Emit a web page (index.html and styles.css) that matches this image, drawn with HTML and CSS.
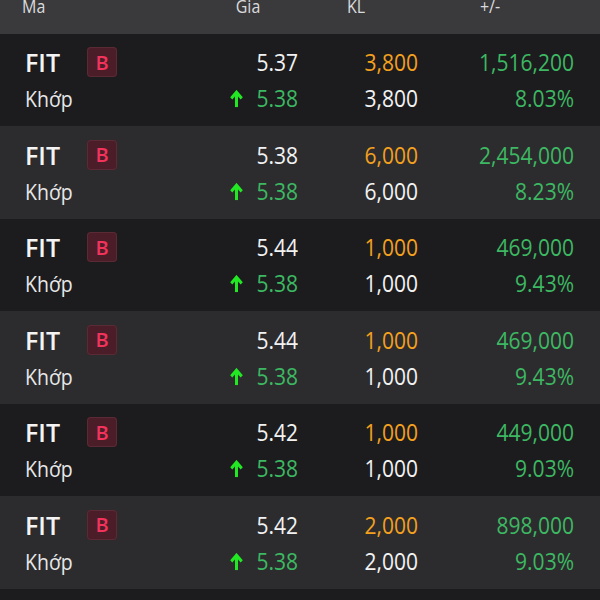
FILE: index.html
```html
<!DOCTYPE html>
<html lang="vi">
<head>
<meta charset="utf-8">
<link rel="stylesheet" href="styles.css">
</head>
<body>
<div class="table">
  <div class="head">
    <span class="h-ma">Ma</span>
    <span class="h-gia">Gia</span>
    <span class="h-kl">KL</span>
    <span class="h-chg">+/-</span>
  </div>

  <div class="row dark">
    <div class="c-sym"><div class="sym"><span class="code">FIT</span><span class="badge">B</span></div><div class="type">Khớp</div></div>
    <div class="c-num"><div class="white">5.37</div><div class="up"><svg class="arrow" viewBox="0 0 14 16"><path d="M7 16V2.2M1.4 7.8L7 2.2L12.6 7.8"/></svg>5.38</div></div>
    <div class="c-num"><div class="orange">3,800</div><div class="white">3,800</div></div>
    <div class="c-num"><div class="green">1,516,200</div><div class="green">8.03%</div></div>
  </div>

  <div class="row grey">
    <div class="c-sym"><div class="sym"><span class="code">FIT</span><span class="badge">B</span></div><div class="type">Khớp</div></div>
    <div class="c-num"><div class="white">5.38</div><div class="up"><svg class="arrow" viewBox="0 0 14 16"><path d="M7 16V2.2M1.4 7.8L7 2.2L12.6 7.8"/></svg>5.38</div></div>
    <div class="c-num"><div class="orange">6,000</div><div class="white">6,000</div></div>
    <div class="c-num"><div class="green">2,454,000</div><div class="green">8.23%</div></div>
  </div>

  <div class="row dark">
    <div class="c-sym"><div class="sym"><span class="code">FIT</span><span class="badge">B</span></div><div class="type">Khớp</div></div>
    <div class="c-num"><div class="white">5.44</div><div class="up"><svg class="arrow" viewBox="0 0 14 16"><path d="M7 16V2.2M1.4 7.8L7 2.2L12.6 7.8"/></svg>5.38</div></div>
    <div class="c-num"><div class="orange">1,000</div><div class="white">1,000</div></div>
    <div class="c-num"><div class="green">469,000</div><div class="green">9.43%</div></div>
  </div>

  <div class="row grey">
    <div class="c-sym"><div class="sym"><span class="code">FIT</span><span class="badge">B</span></div><div class="type">Khớp</div></div>
    <div class="c-num"><div class="white">5.44</div><div class="up"><svg class="arrow" viewBox="0 0 14 16"><path d="M7 16V2.2M1.4 7.8L7 2.2L12.6 7.8"/></svg>5.38</div></div>
    <div class="c-num"><div class="orange">1,000</div><div class="white">1,000</div></div>
    <div class="c-num"><div class="green">469,000</div><div class="green">9.43%</div></div>
  </div>

  <div class="row dark">
    <div class="c-sym"><div class="sym"><span class="code">FIT</span><span class="badge">B</span></div><div class="type">Khớp</div></div>
    <div class="c-num"><div class="white">5.42</div><div class="up"><svg class="arrow" viewBox="0 0 14 16"><path d="M7 16V2.2M1.4 7.8L7 2.2L12.6 7.8"/></svg>5.38</div></div>
    <div class="c-num"><div class="orange">1,000</div><div class="white">1,000</div></div>
    <div class="c-num"><div class="green">449,000</div><div class="green">9.03%</div></div>
  </div>

  <div class="row grey">
    <div class="c-sym"><div class="sym"><span class="code">FIT</span><span class="badge">B</span></div><div class="type">Khớp</div></div>
    <div class="c-num"><div class="white">5.42</div><div class="up"><svg class="arrow" viewBox="0 0 14 16"><path d="M7 16V2.2M1.4 7.8L7 2.2L12.6 7.8"/></svg>5.38</div></div>
    <div class="c-num"><div class="orange">2,000</div><div class="white">2,000</div></div>
    <div class="c-num"><div class="green">898,000</div><div class="green">9.03%</div></div>
  </div>
</div>
</body>
</html>
```

FILE: styles.css
```css
html, body {
  margin: 0;
  padding: 0;
  background: #1c1c1e;
}

body {
  font-family: "Open Sans", "Noto Sans", sans-serif;
  color: #f2f2f2;
  width: 600px;
  height: 600px;
  overflow: hidden;
}

/* header strip */
.head {
  height: 33.5px;
  background: #3a3a3c;
  display: grid;
  grid-template-columns: 200px 96px 120px 148px;
  align-items: start;
  font-size: 16px;
  line-height: 20px;
  color: #dadadc;
  overflow: hidden;
}

.head span {
  margin-top: -4px;
  text-align: center;
  transform: scaleY(1.15);
}

.head .h-ma {
  text-align: left;
  padding-left: 22px;
}

/* data rows */
.row {
  height: 92.5px;
  box-sizing: border-box;
  padding-top: 10.5px;
  display: grid;
  grid-template-columns: 200px 98px 120px 156px;
}

.dark { background: #1c1c1e; }
.grey { background: #2c2c2e; }

.c-sym {
  padding-left: 25px;
}

.sym {
  display: flex;
  align-items: center;
  height: 36px;
}

.code {
  width: 62px;
  font-size: 25px;
  font-weight: 600;
  color: #f4f4f4;
}

.badge {
  width: 30px;
  height: 30px;
  border-radius: 4px;
  background: #4b1d29;
  box-shadow: inset 0 0 0 1px #5a2a35;
  color: #f2335c;
  font-size: 20px;
  font-weight: 600;
  display: flex;
  align-items: center;
  justify-content: center;
}

.type {
  height: 36px;
  line-height: 36px;
  margin-top: 1px;
  font-size: 19.5px;
  font-weight: 500;
  color: #e8e8e8;
  transform: scaleY(1.15);
}

.c-num {
  text-align: right;
  font-size: 21px;
  font-weight: 500;
  line-height: 36px;
}

.c-num > div {
  height: 36px;
  transform: scaleY(1.15);
}

.white { color: #f2f2f2; }
.orange { color: #f3a01e; }
.green { color: #3db862; }

.up {
  color: #3db862;
  display: flex;
  align-items: center;
  justify-content: flex-end;
}

.arrow {
  width: 15px;
  height: 15px;
  margin-right: 12px;
  fill: none;
  stroke: #22e824;
  stroke-width: 3.2;
}
```
